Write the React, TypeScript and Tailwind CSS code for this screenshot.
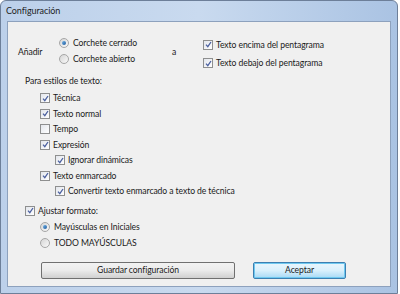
import React from "react";

const font = { fontFamily: 'Lato, "Open Sans", sans-serif' };

const Check = ({ checked }: { checked: boolean }) => (
  <span className="flex h-[10px] w-[10px] shrink-0 items-center justify-center border border-[#8e8f8f] bg-gradient-to-br from-[#dcdcdc] to-[#fbfbfb]">
    <span className="flex h-[8px] w-[8px] items-center justify-center bg-gradient-to-br from-[#e3e6ec] to-white">
      {checked && (
        <svg width="7" height="7" viewBox="0 0 7 7">
          <path d="M1 3.6 L2.8 5.6 L6 1" stroke="#4c61a0" strokeWidth="1.3" fill="none" />
        </svg>
      )}
    </span>
  </span>
);

const Radio = ({ checked }: { checked: boolean }) => (
  <span className="flex h-[10px] w-[10px] shrink-0 items-center justify-center rounded-full border border-[#a6a6a6] bg-gradient-to-br from-[#d5d5d5] to-[#fafafa]">
    {checked && <span className="h-[4px] w-[4px] rounded-full bg-gradient-to-br from-[#6fb2e6] to-[#1f5a9d]" />}
  </span>
);

const CheckRow = ({ label, checked, indent = "" }: { label: string; checked: boolean; indent?: string }) => (
  <div className={`flex h-[15.5px] items-center gap-[3px] whitespace-nowrap ${indent}`}>
    <Check checked={checked} />
    <span>{label}</span>
  </div>
);

const RadioRow = ({ label, checked }: { label: string; checked: boolean }) => (
  <div className="flex h-[16px] items-center gap-[4px] whitespace-nowrap">
    <Radio checked={checked} />
    <span>{label}</span>
  </div>
);

export default function App() {
  return (
    <div
      className="flex h-[294px] w-[400px] flex-col overflow-hidden bg-white text-[8.6px] leading-[12px] tracking-[-0.08px] text-[#1a1a1a]"
      style={font}
    >
      <div className="flex h-[294px] w-[398px] flex-col rounded-t-[6px] border border-[#6d7f99] bg-gradient-to-r from-[#bcd0ea] via-[#c9daef] to-[#aac3e3]">
        <div className="flex h-[20px] items-center pl-[5px] text-[9px] text-[#1e1e1e]">Configuración</div>
        <div className="mx-[6px] mb-[6px] flex flex-1 flex-col border border-[#8da1bd] bg-[#f0f0f0] pl-[10px] pt-[13px]">
          <div className="flex items-start">
            <span className="mt-[11px] w-[41px]">Añadir</span>
            <div className="flex w-[113px] flex-col">
              <RadioRow label="Corchete cerrado" checked />
              <RadioRow label="Corchete abierto" checked={false} />
            </div>
            <span className="mt-[11px] w-[31px]">a</span>
            <div className="mt-[2px] flex flex-col gap-[3px]">
              <CheckRow label="Texto encima del pentagrama" checked />
              <CheckRow label="Texto debajo del pentagrama" checked />
            </div>
          </div>

          <div className="mt-[4px] pl-[7px]">Para estilos de texto:</div>
          <div className="mt-[3.5px] flex flex-col pl-[22px]">
            <CheckRow label="Técnica" checked />
            <CheckRow label="Texto normal" checked />
            <CheckRow label="Tempo" checked={false} />
            <CheckRow label="Expresión" checked />
            <CheckRow label="Ignorar dinámicas" checked indent="pl-[15px]" />
            <CheckRow label="Texto enmarcado" checked />
            <CheckRow label="Convertir texto enmarcado a texto de técnica" checked indent="pl-[15px]" />
          </div>

          <div className="mt-[4px] pl-[7px]">
            <CheckRow label="Ajustar formato:" checked />
          </div>
          <div className="flex flex-col pl-[22px]">
            <RadioRow label="Mayúsculas en Iniciales" checked />
            <RadioRow label="TODO MAYÚSCULAS" checked={false} />
          </div>

          <div className="mt-[11.5px] flex gap-[18px] pl-[23px]">
            <button className="h-[17px] w-[194px] rounded-[2px] border border-[#707070] bg-gradient-to-b from-[#f2f2f2] via-[#ebebeb] to-[#d0d0d0] text-[8.6px] leading-none">
              Guardar configuración
            </button>
            <button className="h-[17px] w-[93px] rounded-[2px] border border-[#3c7fb1] bg-gradient-to-b from-[#eaf6fd] via-[#d9f0fc] to-[#a7d9f5] text-[8.6px] leading-none shadow-[inset_0_0_0_1px_#6fc9f0]">
              Aceptar
            </button>
          </div>
        </div>
      </div>
    </div>
  );
}
